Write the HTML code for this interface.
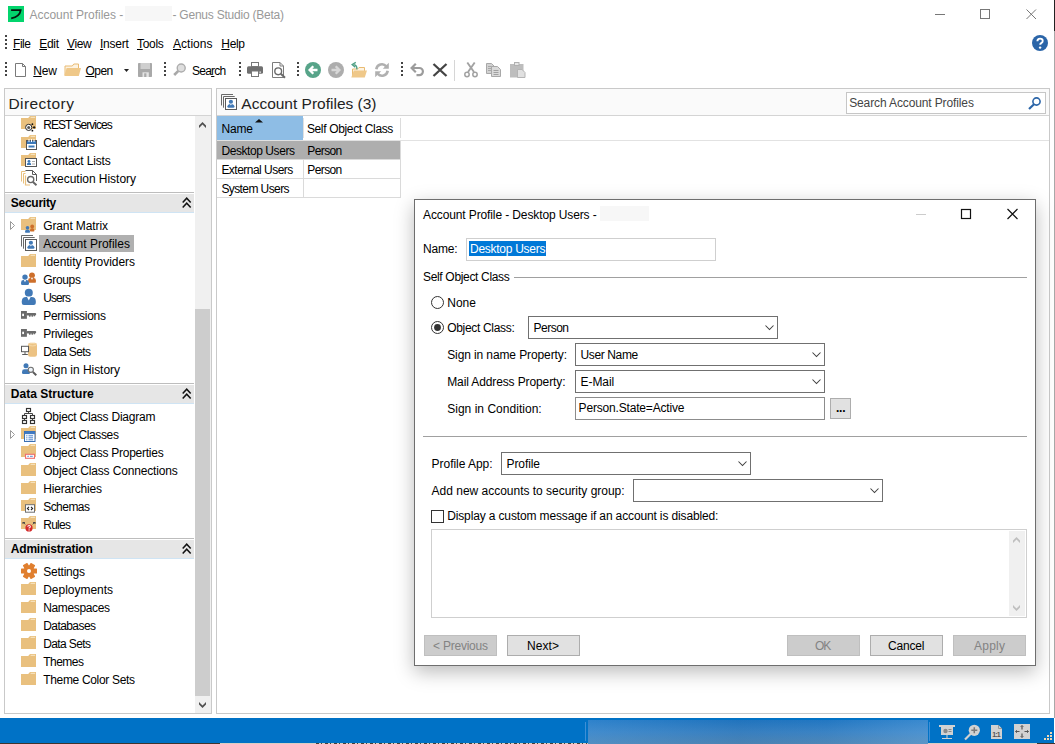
<!DOCTYPE html><html><head><meta charset="utf-8"><title>Account Profiles - Genus Studio (Beta)</title><style>
html,body{margin:0;padding:0;}
body{width:1055px;height:744px;overflow:hidden;background:#fff;font-family:"Liberation Sans",sans-serif;font-size:12px;position:relative;}
.b{position:absolute;box-sizing:border-box;}
.t{position:absolute;white-space:pre;line-height:1;}
.i{position:absolute;overflow:visible;}
u{text-decoration:underline;text-underline-offset:1px;}
</style></head><body>
<svg class="i" style="left:8px;top:6px" width="16" height="16" viewBox="0 0 16 16"><rect width="16" height="16" fill="#03d56d"/><path d="M3.100 4.100H12.700Q11.700 10.800 3.200 12.300" fill="none" stroke="#06180e" stroke-width="1.800"/></svg>
<div class="b" style="left:125px;top:6px;width:47px;height:15px;background:#f7f7f7;"></div>
<svg class="i" style="left:930px;top:4px" width="112" height="22" viewBox="0 0 112 22"><g stroke="#777" stroke-width="1" fill="none"><path d="M5 10.500h10"/><rect x="50.500" y="5.500" width="9" height="9"/><path d="M96.500 5.500l9.500 9.500M106 5.500l-9.500 9.500"/></g></svg>
<div class="b" style="left:1054px;top:0px;width:1px;height:31px;background:#222;"></div>
<div class="b" style="left:1054px;top:31px;width:1px;height:687px;background:#a8a8a8;"></div>
<div class="b" style="left:5px;top:35px;width:2px;height:2px;background:#444;"></div>
<div class="b" style="left:5px;top:39px;width:2px;height:2px;background:#444;"></div>
<div class="b" style="left:5px;top:43px;width:2px;height:2px;background:#444;"></div>
<div class="b" style="left:5px;top:47px;width:2px;height:2px;background:#444;"></div>
<svg class="i" style="left:1032px;top:35px" width="16" height="16" viewBox="0 0 16 16"><circle cx="8" cy="8" r="8" fill="#2b65a8"/><path d="M5.400 6.300q0-2.700 2.700-2.700t2.600 2.400q0 1.300-1.500 2.100-1 .6-1 1.700" fill="none" stroke="#fff" stroke-width="1.900"/><circle cx="8.100" cy="12.600" r="1.200" fill="#fff"/></svg>
<div class="b" style="left:5px;top:62px;width:2px;height:2px;background:#444;"></div>
<div class="b" style="left:5px;top:66px;width:2px;height:2px;background:#444;"></div>
<div class="b" style="left:5px;top:70px;width:2px;height:2px;background:#444;"></div>
<div class="b" style="left:5px;top:74px;width:2px;height:2px;background:#444;"></div>
<svg class="i" style="left:15px;top:63px" width="11" height="14" viewBox="0 0 11 14"><path d="M0.500 0.500H7.500L10.500 3.500V13.500H0.500Z" fill="#fff" stroke="#7a7a7a" stroke-width="1"/><path d="M7.500 0.500V3.500H10.500" fill="none" stroke="#7a7a7a" stroke-width="1"/></svg>
<svg class="i" style="left:64px;top:63px" width="17" height="14" viewBox="0 0 17 14"><path d="M1 12V3H8.300L9.800 1H14.500V5.500" fill="#fdf3e2" stroke="#e9bb72" stroke-width="1"/><path d="M2.600 5H17L14.800 13H0.300Z" fill="#efc889"/></svg>
<svg class="i" style="left:124px;top:69px" width="5" height="3" viewBox="0 0 5 3"><path d="M0 0H5L2.500 3Z" fill="#222"/></svg>
<svg class="i" style="left:138px;top:63px" width="14" height="14" viewBox="0 0 14 14"><rect x="0" y="0" width="14" height="14" rx="0.800" fill="#a9a9a9"/><rect x="2.500" y="0" width="9.500" height="6" fill="#cfcfcf"/><rect x="4.500" y="9.300" width="6.300" height="4.700" fill="#e4e4e4"/><rect x="6.200" y="10.300" width="2.200" height="3.700" fill="#a9a9a9"/></svg>
<div class="b" style="left:164px;top:62px;width:2px;height:2px;background:#444;"></div>
<div class="b" style="left:164px;top:66px;width:2px;height:2px;background:#444;"></div>
<div class="b" style="left:164px;top:70px;width:2px;height:2px;background:#444;"></div>
<div class="b" style="left:164px;top:74px;width:2px;height:2px;background:#444;"></div>
<svg class="i" style="left:173px;top:63px" width="14" height="14" viewBox="0 0 14 14"><path d="M5.600 7.600L1.200 12" stroke="#a8a8a8" stroke-width="2.600"/><circle cx="8.200" cy="5" r="4" fill="#dedede" stroke="#adadad" stroke-width="1.400"/></svg>
<div class="b" style="left:239px;top:62px;width:2px;height:2px;background:#444;"></div>
<div class="b" style="left:239px;top:66px;width:2px;height:2px;background:#444;"></div>
<div class="b" style="left:239px;top:70px;width:2px;height:2px;background:#444;"></div>
<div class="b" style="left:239px;top:74px;width:2px;height:2px;background:#444;"></div>
<svg class="i" style="left:247px;top:62px" width="16" height="15" viewBox="0 0 16 15"><rect x="0" y="4.300" width="16" height="7.400" rx="1.500" fill="#707070"/><rect x="4.500" y="0.500" width="7" height="4" fill="#fff" stroke="#777" stroke-width="1"/><rect x="4.500" y="9" width="7" height="5.500" fill="#fff" stroke="#777" stroke-width="1"/><rect x="12.500" y="9.500" width="1.300" height="1.300" fill="#fff"/></svg>
<svg class="i" style="left:272px;top:62px" width="14" height="16" viewBox="0 0 14 16"><path d="M0.500 0.500H8L11.500 4V15.500H0.500Z" fill="#fff" stroke="#7c7c7c" stroke-width="1"/><path d="M8 0.500V4H11.500" fill="none" stroke="#7c7c7c"/><circle cx="6.200" cy="9.300" r="3.400" fill="#fff" stroke="#6a6a6a" stroke-width="1.400"/><path d="M8.800 11.800l4.200 4" stroke="#6a6a6a" stroke-width="2"/></svg>
<div class="b" style="left:297px;top:62px;width:2px;height:2px;background:#444;"></div>
<div class="b" style="left:297px;top:66px;width:2px;height:2px;background:#444;"></div>
<div class="b" style="left:297px;top:70px;width:2px;height:2px;background:#444;"></div>
<div class="b" style="left:297px;top:74px;width:2px;height:2px;background:#444;"></div>
<svg class="i" style="left:305px;top:62px" width="16" height="16" viewBox="0 0 16 16"><circle cx="8" cy="8" r="8" fill="#57a489"/><path d="M12.500 8H5.500M8.300 4.300L4.600 8L8.300 11.700" fill="none" stroke="#fff" stroke-width="2.300"/></svg>
<svg class="i" style="left:328px;top:62px" width="16" height="16" viewBox="0 0 16 16"><circle cx="8" cy="8" r="8" fill="#adadad"/><path d="M3.500 8H10.500M7.700 4.300L11.400 8L7.700 11.700" fill="none" stroke="#d8d8d8" stroke-width="2.300"/></svg>
<svg class="i" style="left:351px;top:62px" width="17" height="16" viewBox="0 0 17 16"><path d="M1.500 15V7H6.500L8 5.500H13.500V9" fill="#fdf3e2" stroke="#e9bb72" stroke-width="1"/><path d="M2.800 8.500H16L13.800 15.500H0.300Z" fill="#efc889"/><path d="M5.800 7.300Q6.500 3.200 2.500 2.600" fill="none" stroke="#4f9f84" stroke-width="1.400"/><path d="M4.800 0.300L1.200 2.500L4.300 5.200" fill="none" stroke="#4f9f84" stroke-width="1.400"/></svg>
<svg class="i" style="left:374px;top:62px" width="16" height="16" viewBox="0 0 16 16"><path d="M2.300 7.200A5.700 5.700 0 0 1 12.300 4.300" fill="none" stroke="#b0b0b0" stroke-width="2.600"/><path d="M14.800 0.800V6.800H8.800Z" fill="#b0b0b0"/><path d="M13.700 8.800A5.700 5.700 0 0 1 3.700 11.700" fill="none" stroke="#b0b0b0" stroke-width="2.600"/><path d="M1.200 15.200V9.200H7.200Z" fill="#b0b0b0"/></svg>
<div class="b" style="left:401px;top:62px;width:2px;height:2px;background:#444;"></div>
<div class="b" style="left:401px;top:66px;width:2px;height:2px;background:#444;"></div>
<div class="b" style="left:401px;top:70px;width:2px;height:2px;background:#444;"></div>
<div class="b" style="left:401px;top:74px;width:2px;height:2px;background:#444;"></div>
<svg class="i" style="left:410px;top:63px" width="15" height="14" viewBox="0 0 15 14"><path d="M3 5H9.300A3.600 3.600 0 0 1 9.300 12.200H6.500" fill="none" stroke="#9c9c9c" stroke-width="2.200"/><path d="M5.800 0.800L1.600 5L5.800 9.200" fill="none" stroke="#9c9c9c" stroke-width="2.200"/></svg>
<svg class="i" style="left:432px;top:63px" width="16" height="14" viewBox="0 0 16 14"><path d="M1.500 1L14.500 13M14.500 1L1.500 13" stroke="#444" stroke-width="2.300"/></svg>
<div class="b" style="left:454px;top:60px;width:1px;height:21px;background:#d6d6d6;"></div>
<svg class="i" style="left:464px;top:62px" width="14" height="16" viewBox="0 0 14 16"><path d="M3.300 0.500L10 10M10.700 0.500L4 10" stroke="#a2a2a2" stroke-width="1.900"/><circle cx="3" cy="12.500" r="2.200" fill="none" stroke="#a2a2a2" stroke-width="1.500"/><circle cx="11" cy="12.500" r="2.200" fill="none" stroke="#a2a2a2" stroke-width="1.500"/></svg>
<svg class="i" style="left:486px;top:63px" width="15" height="14" viewBox="0 0 15 14"><path d="M0.500 0.500H5.500L8 3V10.500H0.500Z" fill="#d2d2d2" stroke="#a8a8a8"/><path d="M2 3.500h4M2 5.500h4M2 7.500h3" stroke="#a8a8a8"/><path d="M5.500 3.500H11.500L14.500 6.500V13.500H5.500Z" fill="#dadada" stroke="#a8a8a8"/><path d="M7.500 7.500h5M7.500 9.500h5M7.500 11.500h5" stroke="#a0a0a0"/></svg>
<svg class="i" style="left:510px;top:62px" width="16" height="16" viewBox="0 0 16 16"><rect x="0" y="2" width="13.500" height="13.500" fill="#bdbdbd"/><rect x="4.500" y="0.500" width="4.500" height="3" fill="#e6e6e6" stroke="#b0b0b0"/><path d="M7.500 7.500H12L15 10.500V15.500H7.500Z" fill="#e0e0e0" stroke="#b4b4b4"/></svg>
<div class="b" style="left:4px;top:88px;width:208px;height:626px;background:#fff;border:1px solid #c9c9c9;"></div>
<div class="b" style="left:5px;top:89px;width:206px;height:26px;background:#fafafa;"></div>
<div class="b" style="left:5px;top:115px;width:206px;height:1px;background:#d4d4d4;"></div>
<div class="b" style="left:216px;top:88px;width:834px;height:626px;background:#fff;border:1px solid #c9c9c9;"></div>
<div class="b" style="left:217px;top:89px;width:832px;height:26px;background:#fafafa;"></div>
<div class="b" style="left:217px;top:115px;width:832px;height:1px;background:#d4d4d4;"></div>
<svg class="i" style="left:221px;top:94px" width="16" height="16" viewBox="0 0 16 16"><path d="M0.500 11.500V0.500H12" fill="none" stroke="#6a6a6a" stroke-width="1"/><path d="M2.500 13.700V2.500H13.700" fill="none" stroke="#6a6a6a" stroke-width="1"/><rect x="4.500" y="4.500" width="11" height="11" fill="#fff" stroke="#5a5a5a" stroke-width="1"/><circle cx="9.9" cy="7.8" r="2.1" fill="#4179b6"/><path d="M7.31 13.70Q6.20 13.70 6.20 12.59V13.41Q6.20 9.90 9.71 9.90H10.09Q13.60 9.90 13.60 13.41V12.59Q13.60 13.70 12.49 13.70Z" fill="#4179b6"/><path d="M8.86 9.70L9.90 11.61L10.94 9.70Z" fill="#fff"/></svg>
<div class="b" style="left:846px;top:92px;width:200px;height:22px;background:#fff;border:1px solid #c6c6c6;"></div>
<svg class="i" style="left:1028px;top:97px" width="14" height="13" viewBox="0 0 14 13"><circle cx="8.500" cy="4.500" r="3.600" fill="none" stroke="#2b65a8" stroke-width="1.600"/><path d="M6 7.300L1 12" stroke="#2b65a8" stroke-width="2.200"/></svg>
<svg class="i" style="left:21px;top:116px" width="16" height="16" viewBox="0 0 16 16"><g transform="translate(0 -1)"><path d="M0 3H7.200L9 1H15V14H0Z" fill="#e9c07e"/><rect x="9.600" y="1.800" width="4.500" height="1" fill="#f8e8c9"/></g><circle cx="7.700" cy="11.400" r="3.100" fill="#fff" stroke="#2a2a2a" stroke-width="1"/><circle cx="7.700" cy="11.400" r="1.500" fill="#555"/><circle cx="11.400" cy="8.200" r="0.900" fill="#111"/><circle cx="11.400" cy="14.700" r="0.900" fill="#111"/><path d="M11.800 11.400h2.600M13.100 10.100v2.600" stroke="#111" stroke-width="1"/></svg>
<svg class="i" style="left:21px;top:134px" width="16" height="16" viewBox="0 0 16 16"><path d="M0 3H7.200L9 1H15V14H0Z" fill="#e9c07e"/><rect x="9.600" y="1.800" width="4.500" height="1" fill="#f8e8c9"/><rect x="5.5" y="6.5" width="10" height="9" fill="#fff" stroke="#555" stroke-width="1"/><rect x="6" y="7" width="9" height="3" fill="#3b78b8"/><path d="M8 5v3M10.5 5v3M13 5v3" stroke="#fff" stroke-width="1"/><rect x="7.5" y="11.5" width="6" height="2" fill="#3b78b8"/></svg>
<svg class="i" style="left:21px;top:152px" width="16" height="16" viewBox="0 0 16 16"><path d="M0 3H7.200L9 1H15V14H0Z" fill="#e9c07e"/><rect x="9.600" y="1.800" width="4.500" height="1" fill="#f8e8c9"/><rect x="4.5" y="6.5" width="11" height="8" fill="#fff" stroke="#555" stroke-width="1"/><circle cx="8" cy="9.3" r="1.4" fill="#3b78b8"/><path d="M5.8 13q0-2.4 2.2-2.4t2.2 2.4z" fill="#3b78b8"/><path d="M11 9.5h3M11 12h3" stroke="#aaa" stroke-width="1"/></svg>
<svg class="i" style="left:21px;top:170px" width="16" height="16" viewBox="0 0 16 16"><path d="M0.500 11.500V1.500H7" fill="none" stroke="#e9c07e" stroke-width="1"/><path d="M2.500 13.500V3.500H5" fill="none" stroke="#e9c07e" stroke-width="1"/><path d="M4.500 0.500H11.500L15.500 4.500V15.500H4.500Z" fill="#fff"/><path d="M4.500 0.500H11.500L15.500 4.500V11" fill="none" stroke="#5a5a5a" stroke-width="1"/><path d="M11.500 0.500V4.500H15.500" fill="none" stroke="#5a5a5a" stroke-width="1"/><path d="M4.500 5.500V15H9" fill="none" stroke="#e9c07e" stroke-width="1.200"/><circle cx="9.700" cy="9.600" r="3.100" fill="#fff" stroke="#666" stroke-width="1.300"/><path d="M12 12l3.500 3.300" stroke="#666" stroke-width="1.900"/></svg>
<div class="b" style="left:5px;top:192px;width:189px;height:1px;background:#bdbdbd;"></div>
<div class="b" style="left:5px;top:194px;width:189px;height:18px;background:#e6e6e6;"></div>
<div class="b" style="left:5px;top:212px;width:189px;height:1px;background:#cfe4f4;"></div>
<svg class="i" style="left:182px;top:197px" width="10" height="12" viewBox="0 0 10 12"><path d="M0.700 5.500L4.700 1.200L8.700 5.500M0.700 10.500L4.700 6.200L8.700 10.500" fill="none" stroke="#111" stroke-width="1.500"/></svg>
<svg class="i" style="left:21px;top:217px" width="16" height="16" viewBox="0 0 16 16"><g transform="translate(0 -1)"><path d="M0 3H7.200L9 1H15V14H0Z" fill="#e9c07e"/><rect x="9.600" y="1.800" width="4.500" height="1" fill="#f8e8c9"/></g><circle cx="6.5" cy="10.7" r="1.8" fill="#4179b6"/><path d="M4.75 15.80Q4.00 15.80 4.00 15.05V14.85Q4.00 12.60 6.25 12.60H6.75Q9.00 12.60 9.00 14.85V15.05Q9.00 15.80 8.25 15.80Z" fill="#4179b6"/><circle cx="11.2" cy="9.5" r="1.9" fill="#cd6f2b"/><path d="M9.66 14.50Q9.00 14.50 9.00 13.84V13.18Q9.00 11.20 10.98 11.20H11.42Q13.40 11.20 13.40 13.18V13.84Q13.40 14.50 12.74 14.50Z" fill="#cd6f2b"/></svg>
<svg class="i" style="left:10px;top:221px" width="6" height="9" viewBox="0 0 6 9"><path d="M0.500 0.500V8.500L4.500 4.500Z" fill="#fff" stroke="#999" stroke-width="1"/></svg>
<div class="b" style="left:39px;top:235px;width:95px;height:17px;background:#b0b0b0;"></div>
<svg class="i" style="left:21px;top:235px" width="16" height="16" viewBox="0 0 16 16"><path d="M0.500 11.500V0.500H12" fill="none" stroke="#6a6a6a" stroke-width="1"/><path d="M2.500 13.700V2.500H13.700" fill="none" stroke="#6a6a6a" stroke-width="1"/><rect x="4.500" y="4.500" width="11" height="11" fill="#fff" stroke="#5a5a5a" stroke-width="1"/><circle cx="9.9" cy="7.8" r="2.1" fill="#4179b6"/><path d="M7.31 13.70Q6.20 13.70 6.20 12.59V13.41Q6.20 9.90 9.71 9.90H10.09Q13.60 9.90 13.60 13.41V12.59Q13.60 13.70 12.49 13.70Z" fill="#4179b6"/><path d="M8.86 9.70L9.90 11.61L10.94 9.70Z" fill="#fff"/></svg>
<svg class="i" style="left:21px;top:253px" width="16" height="16" viewBox="0 0 16 16"><path d="M0 3H7.200L9 1H15V14H0Z" fill="#e9c07e"/><rect x="9.600" y="1.800" width="4.500" height="1" fill="#f8e8c9"/></svg>
<svg class="i" style="left:21px;top:271px" width="16" height="16" viewBox="0 0 16 16"><circle cx="11" cy="4.3" r="2.9" fill="#cd6f2b"/><path d="M8.27 11.80Q7.10 11.80 7.10 10.63V9.32Q7.10 6.90 9.52 6.90H12.48Q14.90 6.90 14.90 9.32V10.63Q14.90 11.80 13.73 11.80Z" fill="#cd6f2b"/><path d="M9.91 6.70L11.00 9.11L12.09 6.70Z" fill="#fff"/><circle cx="4" cy="6.1" r="2.7" fill="#4179b6"/><path d="M1.23 13.90Q0.05 13.90 0.05 12.71V11.55Q0.05 9.10 2.50 9.10H5.50Q7.95 9.10 7.95 11.55V12.71Q7.95 13.90 6.77 13.90Z" fill="#4179b6"/><path d="M2.89 8.90L4.00 11.26L5.11 8.90Z" fill="#fff"/></svg>
<svg class="i" style="left:21px;top:289px" width="16" height="16" viewBox="0 0 16 16"><circle cx="7.8" cy="3.7" r="4" fill="#4179b6"/><path d="M2.90 16.00Q0.80 16.00 0.80 13.90V12.34Q0.80 8.00 5.14 8.00H10.46Q14.80 8.00 14.80 12.34V13.90Q14.80 16.00 12.70 16.00Z" fill="#4179b6"/><path d="M5.84 7.80L7.80 11.60L9.76 7.80Z" fill="#fff"/></svg>
<svg class="i" style="left:21px;top:307px" width="16" height="16" viewBox="0 0 16 16"><rect x="0" y="4" width="5.900" height="7.800" fill="#6b6b6b"/><rect x="1.200" y="6.700" width="1.800" height="2.400" fill="#fff"/><rect x="5.500" y="6" width="9.700" height="2.400" rx="1.100" fill="#6b6b6b"/><rect x="8" y="8" width="1.600" height="1.700" fill="#6b6b6b"/><rect x="10.500" y="8" width="1.600" height="1.700" fill="#6b6b6b"/><rect x="12.800" y="8" width="1.300" height="1.300" fill="#6b6b6b"/></svg>
<svg class="i" style="left:21px;top:325px" width="16" height="16" viewBox="0 0 16 16"><rect x="0" y="4" width="5.900" height="7.800" fill="#6b6b6b"/><rect x="1.200" y="6.700" width="1.800" height="2.400" fill="#fff"/><rect x="5.500" y="6" width="9.700" height="2.400" rx="1.100" fill="#6b6b6b"/><rect x="8" y="8" width="1.600" height="1.700" fill="#6b6b6b"/><rect x="10.500" y="8" width="1.600" height="1.700" fill="#6b6b6b"/><rect x="12.800" y="8" width="1.300" height="1.300" fill="#6b6b6b"/></svg>
<svg class="i" style="left:21px;top:343px" width="16" height="16" viewBox="0 0 16 16"><rect x="7" y="-0.200" width="9" height="14" rx="2.200" fill="#ecc283"/><ellipse cx="11.500" cy="1.700" rx="3.900" ry="1.200" fill="none" stroke="#f6dcae" stroke-width="0.900"/><rect x="0.500" y="3.300" width="7" height="5.400" fill="#fff" stroke="#5a5a5a" stroke-width="1"/><path d="M4 9v2.300M1.200 11.500h5.600" stroke="#5a5a5a" stroke-width="1"/></svg>
<svg class="i" style="left:21px;top:361px" width="16" height="16" viewBox="0 0 16 16"><circle cx="5" cy="4.7" r="2.5" fill="#4179b6"/><path d="M2.20 12.90Q1.00 12.90 1.00 11.70V10.78Q1.00 8.30 3.48 8.30H6.52Q9.00 8.30 9.00 10.78V11.70Q9.00 12.90 7.80 12.90Z" fill="#4179b6"/><circle cx="9.800" cy="8.800" r="2.600" fill="#eef4fa" stroke="#6f6f6f" stroke-width="1.100"/><path d="M11.900 11l3.400 3.300" stroke="#5a5a5a" stroke-width="1.900"/></svg>
<div class="b" style="left:5px;top:383px;width:189px;height:1px;background:#bdbdbd;"></div>
<div class="b" style="left:5px;top:385px;width:189px;height:18px;background:#e6e6e6;"></div>
<div class="b" style="left:5px;top:403px;width:189px;height:1px;background:#cfe4f4;"></div>
<svg class="i" style="left:182px;top:388px" width="10" height="12" viewBox="0 0 10 12"><path d="M0.700 5.500L4.700 1.200L8.700 5.500M0.700 10.500L4.700 6.200L8.700 10.500" fill="none" stroke="#111" stroke-width="1.500"/></svg>
<svg class="i" style="left:21px;top:408px" width="16" height="16" viewBox="0 0 16 16"><g fill="#fff" stroke="#333" stroke-width="1.150"><rect x="5.500" y="0.500" width="4" height="3"/><rect x="1.500" y="7.500" width="4" height="3"/><rect x="9.500" y="7.500" width="4" height="3"/><rect x="1.500" y="12.500" width="4" height="3"/><rect x="9.500" y="12.500" width="4" height="3"/></g><path d="M7.500 3.500v2M3.500 7.500v-2h8v2M3.500 10.500v2M11.500 10.500v2" fill="none" stroke="#444" stroke-width="1"/></svg>
<svg class="i" style="left:21px;top:426px" width="16" height="16" viewBox="0 0 16 16"><g transform="translate(0 -1)"><path d="M0 3H7.200L9 1H15V14H0Z" fill="#e9c07e"/><rect x="9.600" y="1.800" width="4.500" height="1" fill="#f8e8c9"/></g><rect x="3.500" y="5.500" width="10.500" height="10" fill="#fafcff" stroke="#3a6fb2" stroke-width="1"/><rect x="3.500" y="5.500" width="10.500" height="2.600" fill="#3f79c2"/><path d="M5.200 9.800h1.200M7.500 9.800h4.500M5.200 11.800h1.200M7.500 11.800h4.500M5.200 13.800h1.200M7.500 13.800h4.500" stroke="#4a82cc" stroke-width="1"/></svg>
<svg class="i" style="left:10px;top:430px" width="6" height="9" viewBox="0 0 6 9"><path d="M0.500 0.500V8.500L4.500 4.500Z" fill="#fff" stroke="#999" stroke-width="1"/></svg>
<svg class="i" style="left:21px;top:444px" width="16" height="16" viewBox="0 0 16 16"><g transform="translate(0 -1)"><path d="M0 3H7.200L9 1H15V14H0Z" fill="#e9c07e"/><rect x="9.600" y="1.800" width="4.500" height="1" fill="#f8e8c9"/></g><rect x="4.500" y="10.300" width="9" height="4" fill="#fff" stroke="#ee6e6e" stroke-width="1.100"/><path d="M6.300 12.300h1.600M9 12.300h2.800" stroke="#5b8fd0" stroke-width="1"/></svg>
<svg class="i" style="left:21px;top:462px" width="16" height="16" viewBox="0 0 16 16"><path d="M0 3H7.200L9 1H15V14H0Z" fill="#e9c07e"/><rect x="9.600" y="1.800" width="4.500" height="1" fill="#f8e8c9"/></svg>
<svg class="i" style="left:21px;top:480px" width="16" height="16" viewBox="0 0 16 16"><path d="M0 3H7.200L9 1H15V14H0Z" fill="#e9c07e"/><rect x="9.600" y="1.800" width="4.500" height="1" fill="#f8e8c9"/></svg>
<svg class="i" style="left:21px;top:498px" width="16" height="16" viewBox="0 0 16 16"><g transform="translate(0 -1)"><path d="M0 3H7.200L9 1H15V14H0Z" fill="#e9c07e"/><rect x="9.600" y="1.800" width="4.500" height="1" fill="#f8e8c9"/></g><rect x="4.500" y="6.700" width="9" height="7.500" fill="#fff" stroke="#6e6e6e" stroke-width="1"/><path d="M8 8.800L6.400 10.400l1.600 1.600M10 8.800L11.600 10.400l-1.600 1.600" fill="none" stroke="#222" stroke-width="1.100"/></svg>
<svg class="i" style="left:21px;top:516px" width="16" height="16" viewBox="0 0 16 16"><g transform="translate(0 -1)"><path d="M0 3H7.200L9 1H15V14H0Z" fill="#e9c07e"/><rect x="9.600" y="1.800" width="4.500" height="1" fill="#f8e8c9"/></g><path d="M2 6.200L4.300 8.300M14 6.200L11.700 8.300M1.800 6.500h2.200M14.200 6.500h-2.200M2 6v2M14 6v2" stroke="#444" stroke-width="0.900"/><circle cx="8" cy="11.900" r="3.600" fill="#d42a2a"/><path d="M6.800 10.800q0-1.300 1.300-1.300t1.200 1.200q0 .7-1.200 1.300v.500" fill="none" stroke="#fff" stroke-width="1.050"/><circle cx="8.100" cy="13.900" r=".650" fill="#fff"/></svg>
<div class="b" style="left:5px;top:538px;width:189px;height:1px;background:#bdbdbd;"></div>
<div class="b" style="left:5px;top:540px;width:189px;height:18px;background:#e6e6e6;"></div>
<div class="b" style="left:5px;top:558px;width:189px;height:1px;background:#cfe4f4;"></div>
<svg class="i" style="left:182px;top:543px" width="10" height="12" viewBox="0 0 10 12"><path d="M0.700 5.500L4.700 1.200L8.700 5.500M0.700 10.500L4.700 6.200L8.700 10.500" fill="none" stroke="#111" stroke-width="1.500"/></svg>
<svg class="i" style="left:21px;top:563px" width="16" height="16" viewBox="0 0 16 16"><rect x="-2.600" y="-8" width="5.200" height="16" rx="0.600" transform="translate(8 8) rotate(90)" fill="#e07f2f"/><rect x="-2.600" y="-8" width="5.200" height="16" rx="0.600" transform="translate(8 8) rotate(30)" fill="#e07f2f"/><rect x="-2.600" y="-8" width="5.200" height="16" rx="0.600" transform="translate(8 8) rotate(150)" fill="#e07f2f"/><circle cx="8" cy="8" r="5.400" fill="#e07f2f"/><circle cx="8" cy="8" r="2" fill="#fff"/></svg>
<svg class="i" style="left:21px;top:581px" width="16" height="16" viewBox="0 0 16 16"><path d="M0 3H7.200L9 1H15V14H0Z" fill="#e9c07e"/><rect x="9.600" y="1.800" width="4.500" height="1" fill="#f8e8c9"/></svg>
<svg class="i" style="left:21px;top:599px" width="16" height="16" viewBox="0 0 16 16"><path d="M0 3H7.200L9 1H15V14H0Z" fill="#e9c07e"/><rect x="9.600" y="1.800" width="4.500" height="1" fill="#f8e8c9"/></svg>
<svg class="i" style="left:21px;top:617px" width="16" height="16" viewBox="0 0 16 16"><path d="M0 3H7.200L9 1H15V14H0Z" fill="#e9c07e"/><rect x="9.600" y="1.800" width="4.500" height="1" fill="#f8e8c9"/></svg>
<svg class="i" style="left:21px;top:635px" width="16" height="16" viewBox="0 0 16 16"><path d="M0 3H7.200L9 1H15V14H0Z" fill="#e9c07e"/><rect x="9.600" y="1.800" width="4.500" height="1" fill="#f8e8c9"/></svg>
<svg class="i" style="left:21px;top:653px" width="16" height="16" viewBox="0 0 16 16"><path d="M0 3H7.200L9 1H15V14H0Z" fill="#e9c07e"/><rect x="9.600" y="1.800" width="4.500" height="1" fill="#f8e8c9"/></svg>
<svg class="i" style="left:21px;top:671px" width="16" height="16" viewBox="0 0 16 16"><path d="M0 3H7.200L9 1H15V14H0Z" fill="#e9c07e"/><rect x="9.600" y="1.800" width="4.500" height="1" fill="#f8e8c9"/></svg>
<div class="b" style="left:195px;top:116px;width:16px;height:597px;background:#f0f0f0;"></div>
<div class="b" style="left:195px;top:309px;width:15px;height:387px;background:#cdcdcd;"></div>
<svg class="i" style="left:199px;top:122px" width="7" height="6" viewBox="0 0 7 6"><path d="M3.500 0L7 3.500V6L3.500 2.500L0 6V3.500Z" fill="#505050"/></svg>
<svg class="i" style="left:199px;top:702px" width="7" height="6" viewBox="0 0 7 6"><path d="M0 0L3.500 3.500L7 0V2.500L3.500 6L0 2.500Z" fill="#505050"/></svg>
<div class="b" style="left:217px;top:116px;width:86px;height:24px;background:#8ebde5;"></div>
<div class="b" style="left:217px;top:140px;width:832px;height:1px;background:#e2e2e2;"></div>
<div class="b" style="left:400px;top:118px;width:1px;height:20px;background:#dcdcdc;"></div>
<div class="b" style="left:303px;top:118px;width:1px;height:20px;background:#e0e0e0;"></div>
<svg class="i" style="left:255px;top:119px" width="8" height="4" viewBox="0 0 8 4"><path d="M0 3.500L4 0L8 3.500Z" fill="#111"/></svg>
<div class="b" style="left:217px;top:141px;width:184px;height:19px;background:#aeaeae;"></div>
<div class="b" style="left:217px;top:159px;width:184px;height:1px;background:#dadada;"></div>
<div class="b" style="left:217px;top:178px;width:184px;height:1px;background:#dadada;"></div>
<div class="b" style="left:217px;top:197px;width:184px;height:1px;background:#dadada;"></div>
<div class="b" style="left:303px;top:160px;width:1px;height:38px;background:#dadada;"></div>
<div class="b" style="left:400px;top:141px;width:1px;height:57px;background:#dadada;"></div>
<div class="b" style="left:414px;top:199px;width:622px;height:467px;background:#fff;border:1px solid #6e6e6e;box-shadow:0 6px 18px 0 rgba(0,0,0,0.27);"></div>
<div class="b" style="left:600px;top:206px;width:49px;height:15px;background:#f7f7f7;"></div>
<svg class="i" style="left:910px;top:204px" width="112" height="20" viewBox="0 0 112 20"><path d="M6 10.500h10" stroke="#ccc" fill="none"/><rect x="51.500" y="5.500" width="9" height="9" fill="none" stroke="#111" stroke-width="1.200"/><path d="M97.500 5l10 10M107.500 5l-10 10" stroke="#111" stroke-width="1.200" fill="none"/></svg>
<div class="b" style="left:466px;top:238px;width:250px;height:23px;background:#fff;border:1px solid #cfcfcf;"></div>
<div class="b" style="left:469px;top:241px;width:77px;height:15px;background:#0078d7;"></div>
<div class="b" style="left:514px;top:277px;width:513px;height:1px;background:#a0a0a0;"></div>
<svg class="i" style="left:431.0px;top:296.0px" width="13" height="13" viewBox="0 0 13 13"><circle cx="6.500" cy="6.500" r="6" fill="#fff" stroke="#333" stroke-width="1"/></svg>
<svg class="i" style="left:431.0px;top:321.0px" width="13" height="13" viewBox="0 0 13 13"><circle cx="6.500" cy="6.500" r="6" fill="#fff" stroke="#333" stroke-width="1"/><circle cx="6.500" cy="6.500" r="3.400" fill="#333"/></svg>
<div class="b" style="left:528px;top:316px;width:250px;height:23px;background:#fff;border:1px solid #707070;"></div>
<svg class="i" style="left:764.5px;top:325px" width="9" height="6" viewBox="0 0 9 6"><path d="M0.500 0.500L4.500 4.500L8.500 0.500" fill="none" stroke="#3c3c3c" stroke-width="1.050"/></svg>
<div class="b" style="left:575px;top:343px;width:250px;height:23px;background:#fff;border:1px solid #707070;"></div>
<svg class="i" style="left:811.5px;top:352px" width="9" height="6" viewBox="0 0 9 6"><path d="M0.500 0.500L4.500 4.500L8.500 0.500" fill="none" stroke="#3c3c3c" stroke-width="1.050"/></svg>
<div class="b" style="left:575px;top:370px;width:250px;height:23px;background:#fff;border:1px solid #707070;"></div>
<svg class="i" style="left:811.5px;top:379px" width="9" height="6" viewBox="0 0 9 6"><path d="M0.500 0.500L4.500 4.500L8.500 0.500" fill="none" stroke="#3c3c3c" stroke-width="1.050"/></svg>
<div class="b" style="left:575px;top:397px;width:250px;height:23px;background:#fff;border:1px solid #8c8c8c;"></div>
<div class="b" style="left:830px;top:398px;width:21px;height:21px;background:#e1e1e1;border:1px solid #adadad;"></div>
<div class="b" style="left:423px;top:436px;width:604px;height:1px;background:#a0a0a0;"></div>
<div class="b" style="left:501px;top:452px;width:250px;height:23px;background:#fff;border:1px solid #707070;"></div>
<svg class="i" style="left:737.5px;top:461px" width="9" height="6" viewBox="0 0 9 6"><path d="M0.500 0.500L4.500 4.500L8.500 0.500" fill="none" stroke="#3c3c3c" stroke-width="1.050"/></svg>
<div class="b" style="left:633px;top:479px;width:250px;height:23px;background:#fff;border:1px solid #707070;"></div>
<svg class="i" style="left:869.5px;top:488px" width="9" height="6" viewBox="0 0 9 6"><path d="M0.500 0.500L4.500 4.500L8.500 0.500" fill="none" stroke="#3c3c3c" stroke-width="1.050"/></svg>
<div class="b" style="left:431px;top:510px;width:13px;height:13px;background:#fff;border:1px solid #333;"></div>
<div class="b" style="left:431px;top:529px;width:596px;height:89px;background:#fff;border:1px solid #cfcfcf;"></div>
<div class="b" style="left:1009px;top:531px;width:16px;height:85px;background:#f0f0f0;"></div>
<svg class="i" style="left:1013px;top:537px" width="7" height="6" viewBox="0 0 7 6"><path d="M3.500 0L7 3.500V6L3.500 2.500L0 6V3.500Z" fill="#bfbfbf"/></svg>
<svg class="i" style="left:1013px;top:605px" width="7" height="6" viewBox="0 0 7 6"><path d="M0 0L3.500 3.500L7 0V2.500L3.500 6L0 2.500Z" fill="#bfbfbf"/></svg>
<div class="b" style="left:424px;top:635px;width:73px;height:21px;background:#cccccc;border:1px solid #bfbfbf;"></div>
<div class="b" style="left:507px;top:635px;width:73px;height:21px;background:#e1e1e1;border:1px solid #adadad;"></div>
<div class="b" style="left:787px;top:635px;width:73px;height:21px;background:#cccccc;border:1px solid #bfbfbf;"></div>
<div class="b" style="left:870px;top:635px;width:73px;height:21px;background:#e1e1e1;border:1px solid #adadad;"></div>
<div class="b" style="left:953px;top:635px;width:73px;height:21px;background:#cccccc;border:1px solid #bfbfbf;"></div>
<div class="b" style="left:0px;top:718px;width:1054px;height:25px;background:#0072c6;"></div>
<div class="b" style="left:588px;top:720px;width:340px;height:24px;z-index:3;background:linear-gradient(to bottom,#1f78c6 0%,#3a85c8 50%,#5089b9 100%);"></div>
<div class="b" style="left:588px;top:720px;width:340px;height:24px;z-index:3;background:linear-gradient(to right,rgba(90,160,220,0.25) 0%,rgba(40,90,140,0.15) 45%,rgba(60,110,160,0.1) 70%,rgba(120,180,230,0.3) 100%);"></div>
<div class="b" style="left:585px;top:722px;width:1px;height:19px;background:#3d8fd6;"></div>
<div class="b" style="left:929px;top:722px;width:1px;height:19px;background:#3d8fd6;"></div>
<svg class="i" style="left:939px;top:725px" width="16" height="14" viewBox="0 0 16 14"><rect x="0" y="0" width="16" height="2" fill="#d2d2d2"/><rect x="2" y="2" width="12" height="8" fill="#d2d2d2"/><circle cx="6.500" cy="6" r="2.200" fill="#8a8a8a"/><path d="M9.500 4.500h3M9.500 6.500h3" stroke="#8a8a8a"/><rect x="7.500" y="10" width="1" height="3" fill="#d2d2d2"/><rect x="3" y="13" width="10" height="1" fill="#d2d2d2"/></svg>
<svg class="i" style="left:964px;top:724px" width="17" height="16" viewBox="0 0 17 16"><path d="M7 9.500L1 15.500" stroke="#d2d2d2" stroke-width="2.200"/><circle cx="10.300" cy="6.300" r="5.600" fill="#d2d2d2"/><path d="M10.300 3.300v6M7.300 6.300h6" stroke="#7a7a7a" stroke-width="1.500"/></svg>
<svg class="i" style="left:991px;top:725px" width="11" height="14" viewBox="0 0 11 14"><path d="M0 0H7.500L11 3.500V14H0Z" fill="#d2d2d2"/><path d="M7.500 0V3.500H11" fill="none" stroke="#999" stroke-width="1"/></svg>
<svg class="i" style="left:1014px;top:724px" width="16" height="15" viewBox="0 0 16 15"><rect x="0" y="0" width="16" height="15" fill="#d2d2d2"/><path d="M8 1.500v4M8 9.500v4M1.500 7.500h4M10.500 7.500h4" stroke="#555" stroke-width="1.200"/><path d="M6.500 3L8 1.500L9.500 3M6.500 12L8 13.500L9.500 12M3 6L1.500 7.500L3 9M13 6L14.500 7.500L13 9" fill="none" stroke="#555" stroke-width="0.800"/></svg>
<div class="b" style="left:1050px;top:732px;width:2px;height:2px;background:#efd8b4;"></div>
<div class="b" style="left:1047px;top:735px;width:2px;height:2px;background:#efd8b4;"></div>
<div class="b" style="left:1050px;top:735px;width:2px;height:2px;background:#efd8b4;"></div>
<div class="b" style="left:1044px;top:738px;width:2px;height:2px;background:#efd8b4;"></div>
<div class="b" style="left:1047px;top:738px;width:2px;height:2px;background:#efd8b4;"></div>
<div class="b" style="left:1050px;top:738px;width:2px;height:2px;background:#efd8b4;"></div>
<div class="b" style="left:0px;top:743px;width:220px;height:1px;background:#40352e;"></div>
<div class="b" style="left:220px;top:743px;width:835px;height:1px;background:#d9cfc4;"></div>
<div class="b" style="left:316px;top:743px;width:271px;height:1px;background:repeating-linear-gradient(to right,#4a4038 0 3px,#d9cfc4 3px 5px,#4a4038 5px 6px,#d9cfc4 6px 9px);"></div>
<div class="b" style="left:1037px;top:743px;width:18px;height:1px;background:#40352e;"></div>
<span class="t" style="left:29.5px;top:9.00px;color:#999;letter-spacing:-0.015px;">Account Profiles -</span>
<span class="t" style="left:172.5px;top:9.00px;color:#999;letter-spacing:-0.228px;">- Genus Studio (Beta)</span>
<span class="t" style="left:13px;top:37.50px;letter-spacing:-0.453px;"><u>F</u>ile</span>
<span class="t" style="left:39.3px;top:37.50px;letter-spacing:-0.334px;"><u>E</u>dit</span>
<span class="t" style="left:67px;top:37.50px;letter-spacing:-0.338px;"><u>V</u>iew</span>
<span class="t" style="left:100px;top:37.50px;letter-spacing:-0.246px;"><u>I</u>nsert</span>
<span class="t" style="left:137px;top:37.50px;letter-spacing:-0.304px;"><u>T</u>ools</span>
<span class="t" style="left:173px;top:37.50px;letter-spacing:0.021px;"><u>A</u>ctions</span>
<span class="t" style="left:221.3px;top:37.50px;letter-spacing:-0.329px;"><u>H</u>elp</span>
<span class="t" style="left:33.3px;top:64.50px;letter-spacing:-0.158px;"><u>N</u>ew</span>
<span class="t" style="left:85.5px;top:64.50px;letter-spacing:-0.525px;"><u>O</u>pen</span>
<span class="t" style="left:192px;top:64.50px;letter-spacing:-0.749px;">Sea<u>r</u>ch</span>
<span class="t" style="left:8.4px;top:96.15px;font-size:15.5px;color:#222;letter-spacing:0.448px;">Directory</span>
<span class="t" style="left:241.3px;top:96.15px;font-size:15.5px;color:#222;letter-spacing:-0.003px;">Account Profiles (3)</span>
<span class="t" style="left:849.2px;top:96.80px;color:#444;letter-spacing:-0.123px;">Search Account Profiles</span>
<span class="t" style="left:43.2px;top:118.60px;letter-spacing:-0.962px;">REST Services</span>
<span class="t" style="left:43.2px;top:136.60px;letter-spacing:-0.363px;">Calendars</span>
<span class="t" style="left:43.2px;top:154.60px;letter-spacing:-0.148px;">Contact Lists</span>
<span class="t" style="left:43.2px;top:172.60px;letter-spacing:-0.036px;">Execution History</span>
<span class="t" style="left:10.8px;top:196.60px;font-weight:700;letter-spacing:-0.266px;">Security</span>
<span class="t" style="left:43.2px;top:219.60px;letter-spacing:-0.111px;">Grant Matrix</span>
<span class="t" style="left:43.2px;top:237.60px;letter-spacing:0.005px;">Account Profiles</span>
<span class="t" style="left:43.2px;top:255.60px;letter-spacing:-0.054px;">Identity Providers</span>
<span class="t" style="left:43.2px;top:273.60px;letter-spacing:-0.312px;">Groups</span>
<span class="t" style="left:43.2px;top:291.60px;letter-spacing:-0.886px;">Users</span>
<span class="t" style="left:43.2px;top:309.60px;letter-spacing:-0.256px;">Permissions</span>
<span class="t" style="left:43.2px;top:327.60px;letter-spacing:-0.248px;">Privileges</span>
<span class="t" style="left:43.2px;top:345.60px;letter-spacing:-0.613px;">Data Sets</span>
<span class="t" style="left:43.2px;top:363.60px;letter-spacing:-0.041px;">Sign in History</span>
<span class="t" style="left:10.8px;top:387.60px;font-weight:700;letter-spacing:0.024px;">Data Structure</span>
<span class="t" style="left:43.2px;top:410.60px;letter-spacing:-0.237px;">Object Class Diagram</span>
<span class="t" style="left:43.2px;top:428.60px;letter-spacing:-0.385px;">Object Classes</span>
<span class="t" style="left:43.2px;top:446.60px;letter-spacing:-0.252px;">Object Class Properties</span>
<span class="t" style="left:43.2px;top:464.60px;letter-spacing:-0.147px;">Object Class Connections</span>
<span class="t" style="left:43.2px;top:482.60px;letter-spacing:-0.189px;">Hierarchies</span>
<span class="t" style="left:43.2px;top:500.60px;letter-spacing:-0.539px;">Schemas</span>
<span class="t" style="left:43.2px;top:518.60px;letter-spacing:-0.722px;">Rules</span>
<span class="t" style="left:10.8px;top:542.60px;font-weight:700;letter-spacing:-0.206px;">Administration</span>
<span class="t" style="left:43.2px;top:565.60px;letter-spacing:-0.223px;">Settings</span>
<span class="t" style="left:43.2px;top:583.60px;letter-spacing:-0.023px;">Deployments</span>
<span class="t" style="left:43.2px;top:601.60px;letter-spacing:-0.359px;">Namespaces</span>
<span class="t" style="left:43.2px;top:619.60px;letter-spacing:-0.572px;">Databases</span>
<span class="t" style="left:43.2px;top:637.60px;letter-spacing:-0.613px;">Data Sets</span>
<span class="t" style="left:43.2px;top:655.60px;letter-spacing:-0.512px;">Themes</span>
<span class="t" style="left:43.2px;top:673.60px;letter-spacing:-0.327px;">Theme Color Sets</span>
<span class="t" style="left:221.4px;top:123.00px;letter-spacing:-0.139px;">Name</span>
<span class="t" style="left:306.9px;top:123.00px;letter-spacing:-0.347px;">Self Object Class</span>
<span class="t" style="left:221.4px;top:145.00px;letter-spacing:-0.425px;">Desktop Users</span>
<span class="t" style="left:307.3px;top:145.00px;letter-spacing:-0.606px;">Person</span>
<span class="t" style="left:221.4px;top:164.00px;letter-spacing:-0.523px;">External Users</span>
<span class="t" style="left:307.3px;top:164.00px;letter-spacing:-0.606px;">Person</span>
<span class="t" style="left:221.4px;top:183.00px;letter-spacing:-0.590px;">System Users</span>
<span class="t" style="left:423px;top:208.80px;letter-spacing:-0.116px;">Account Profile - Desktop Users -</span>
<span class="t" style="left:423px;top:243.00px;letter-spacing:-0.211px;">Name:</span>
<span class="t" style="left:470px;top:243.00px;color:#fff;letter-spacing:-0.267px;">Desktop Users</span>
<span class="t" style="left:423px;top:270.70px;letter-spacing:-0.328px;">Self Object Class</span>
<span class="t" style="left:447.2px;top:296.70px;letter-spacing:0.038px;">None</span>
<span class="t" style="left:447.2px;top:322.00px;letter-spacing:-0.313px;">Object Class:</span>
<span class="t" style="left:533.5px;top:322.00px;letter-spacing:-0.506px;">Person</span>
<span class="t" style="left:447.2px;top:348.80px;letter-spacing:-0.108px;">Sign in name Property:</span>
<span class="t" style="left:580.5px;top:348.80px;letter-spacing:-0.373px;">User Name</span>
<span class="t" style="left:447.2px;top:375.70px;letter-spacing:-0.115px;">Mail Address Property:</span>
<span class="t" style="left:580.5px;top:375.70px;letter-spacing:-0.043px;">E-Mail</span>
<span class="t" style="left:447.2px;top:402.90px;letter-spacing:0.026px;">Sign in Condition:</span>
<span class="t" style="left:578.6px;top:402.00px;letter-spacing:-0.176px;">Person.State=Active</span>
<span class="t" style="left:836px;top:402.00px;font-weight:700;letter-spacing:-0.258px;">...</span>
<span class="t" style="left:431.6px;top:457.60px;letter-spacing:-0.034px;">Profile App:</span>
<span class="t" style="left:506.5px;top:457.60px;letter-spacing:-0.086px;">Profile</span>
<span class="t" style="left:431.6px;top:485.00px;letter-spacing:-0.013px;">Add new accounts to security group:</span>
<span class="t" style="left:447.2px;top:510.00px;letter-spacing:-0.139px;">Display a custom message if an account is disabled:</span>
<span class="t" style="left:433px;top:640.00px;color:#838383;letter-spacing:-0.226px;">&lt; Previous</span>
<span class="t" style="left:527px;top:640.00px;letter-spacing:0.078px;">Next&gt;</span>
<span class="t" style="left:815px;top:640.00px;color:#838383;letter-spacing:-1.200px;">OK</span>
<span class="t" style="left:888px;top:640.00px;letter-spacing:-0.172px;">Cancel</span>
<span class="t" style="left:974px;top:640.00px;color:#838383;letter-spacing:0.242px;">Apply</span>
<span class="t" style="left:992.3px;top:731.00px;font-size:7px;color:#555;letter-spacing:-0.912px;font-weight:700;">1:1</span>
</body></html>
